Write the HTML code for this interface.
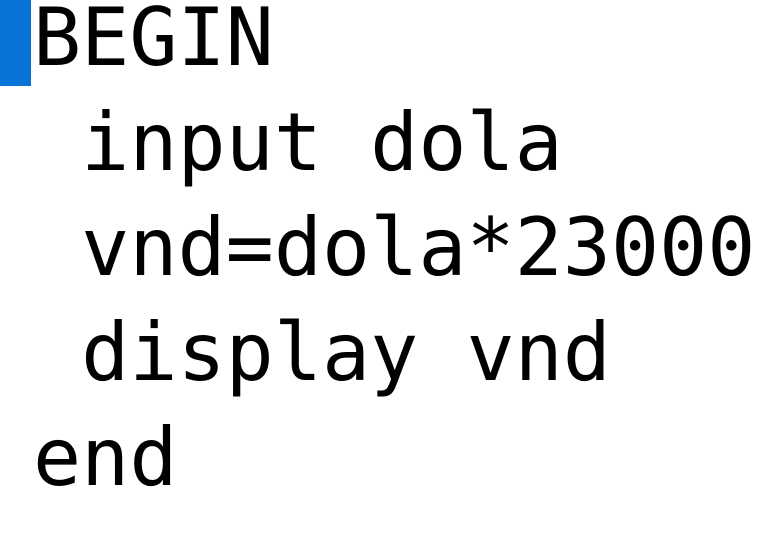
<!DOCTYPE html>
<html>
<head>
<meta charset="utf-8">
<style>
html,body{margin:0;padding:0;background:#fff;width:784px;height:548px;overflow:hidden;}
.bar{position:absolute;left:0;top:0;width:31px;height:86px;background:#0a74d6;}
pre{position:absolute;left:33px;top:-15px;margin:0;font-family:"DejaVu Sans Mono","Liberation Mono",monospace;font-size:80px;line-height:105px;color:#000;white-space:pre;}
</style>
</head>
<body>
<div class="bar"></div>
<pre>BEGIN
 input dola
 vnd=dola*23000
 display vnd
end</pre>
</body>
</html>
